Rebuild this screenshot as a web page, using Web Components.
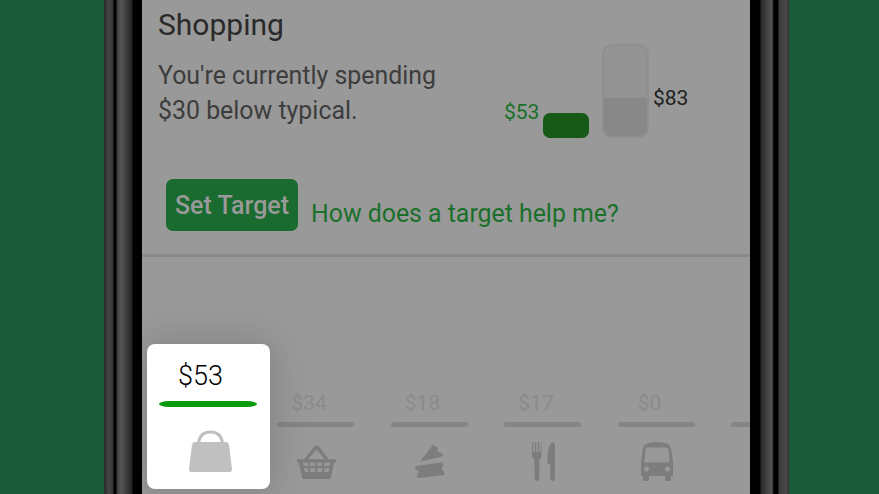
<!DOCTYPE html>
<html>
<head>
<meta charset="utf-8">
<style>
  html, body { margin: 0; height: 100%; overflow: hidden; background: #1b5a3a; }
  body { font-family: Roboto, "Noto Sans", sans-serif; }
</style>
</head>
<body>
<phone-frame>
  <spend-summary title="Shopping" spent="53" typical="83" fill="43">
    You're currently spending<br>$30 below typical.
  </spend-summary>
  <target-actions></target-actions>
  <tab-strip>
    <tab-item amount="$53"></tab-item>
    <tab-item amount="$34">
      <svg viewBox="0 0 40 36" width="39" height="34" preserveAspectRatio="none">
        <path fill="#7d7d7d" fill-rule="evenodd" d="M0 15h7.500L17.500 1.500Q20 -.5 22.500 1.500L32.500 15H40V18.500H38L35 34Q34.800 36 33 36H7Q5.200 36 5 34L2 18.500H0ZM11.500 15h17L20 4.500ZM6 18.500l.7 3.800h4.800v-3.800ZM13.500 18.500v3.800h5v-3.800ZM20.800 18.500v3.800h5v-3.800ZM28 18.500v3.800h5.300l.7-3.800ZM7.200 24.500l.8 4h3.500v-4ZM13.500 24.500v4h5v-4ZM20.800 24.500v4h5v-4ZM28 24.500v4h4.200l.8-4Z"/>
      </svg>
    </tab-item>
    <tab-item amount="$18">
      <svg viewBox="0 0 32 35" width="32" height="35">
        <path fill="#7d7d7d" d="M5.700 17.700L19 .7l5.300 3.600L23 7l6 3-.7 2.300ZM1 22.300L28.300 18.300l.8 4.200q-1.800 1-1.300 3 .5 1.700 2.300 1.500l.6 4L3.700 34.300l-.6-4.300q1.800-.8 1.400-2.800-.5-1.700-2.700-1.500Z"/>
      </svg>
    </tab-item>
    <tab-item amount="$17">
      <svg viewBox="0 0 24 39" width="24" height="39">
        <path fill="#7d7d7d" d="M0 0h1.200v10h1.600V0h1.400v10h1.600V0h1.400v10h1.600V0H9.500v13q0 3.500-2.200 4.500V37q0 2-2.400 2t-2.400-2V17.500Q0 16.500 0 13ZM20 0Q23 0 23 4V37q0 2-2.300 2t-2.400-2V22H15.500V14Q15.500 5 20 0Z"/>
      </svg>
    </tab-item>
    <tab-item amount="$0">
      <svg viewBox="0 0 34 39" width="34" height="39">
        <path fill="#7d7d7d" fill-rule="evenodd" d="M17 0Q30 0 31 6L33 20V34H31V37.500Q31 39 29 39H27Q25 39 25 37.500V34H9V37.500Q9 39 7 39H5Q3 39 3 37.500V34H1V20L3 6Q4 0 17 0ZM8 5.500Q5.800 5.500 5.500 7.500L4.500 19Q4.500 20.500 6 20.500H28Q29.500 20.500 29.500 19L28.500 7.500Q28.200 5.500 26 5.500ZM6.500 24.500a2.500 2.500 0 1 0 .01 0ZM27.500 24.500a2.500 2.500 0 1 0 .01 0Z"/>
      </svg>
    </tab-item>
    <tab-item amount=""></tab-item>
  </tab-strip>
  <focus-card amount="$53" slot="over"></focus-card>
</phone-frame>

<script>
class PhoneFrame extends HTMLElement {
  constructor() {
    super();
    this.attachShadow({ mode: 'open' });
  }

  connectedCallback() {
    this.shadowRoot.innerHTML = `
      <style>
        :host {
          display: flex;
          padding-left: 104px;
          height: 494px;
          overflow: hidden;
        }
        .rail {
          flex: none;
          width: 38px;
          background: linear-gradient(90deg, #2b2b2b 0, #444 5px, #333 9px, #000 10px, #000 12px, #3a3a3a 13px, #585858 17px, #222 28px, #000 29px);
        }
        .rail.right {
          width: 39px;
          background: linear-gradient(90deg, #000 0, #000 10px, #2a2a2a 11px, #555 22px, #222 23px, #000 24px, #000 28px, #3c3c3c 29px, #4a4a4a 37px, #2b2b2b 39px);
        }
        .screen {
          flex: none;
          width: 608px;
          position: relative;
          overflow: hidden;
          background: #999;
        }
      </style>
      <div class="rail"></div>
      <div class="screen">
        <slot></slot>
        <slot name="over"></slot>
      </div>
      <div class="rail right"></div>
    `;
  }
}

class SpendSummary extends HTMLElement {
  constructor() {
    super();
    this.attachShadow({ mode: 'open' });
  }

  connectedCallback() {
    const title = this.getAttribute('title');
    const spent = this.getAttribute('spent');
    const typical = this.getAttribute('typical');
    const fill = this.getAttribute('fill');

    this.shadowRoot.innerHTML = `
      <style>
        :host {
          display: flex;
          height: 179px;
          box-sizing: border-box;
          padding-left: 16px;
        }
        .copy { width: 346px; padding-top: 7px; }
        h2 {
          margin: 0;
          font-size: 30px;
          font-weight: 400;
          line-height: 36px;
          color: #2a2a2a;
        }
        p {
          margin: 15px 0 0;
          font-size: 24.9px;
          line-height: 35px;
          color: #3d3d3d;
        }
        .bars { display: flex; align-items: flex-end; height: 138px; }
        .col { display: flex; align-items: flex-end; }
        .spent { color: #1a7029; font-size: 21px; line-height: 24px; margin: 0 3px 14px 0; width: 36px; }
        .spent-bar { width: 46px; height: 25px; border-radius: 7px; background: #175a18; }
        .typical-bar {
          width: 47px;
          height: 94px;
          margin-left: 13px;
          box-sizing: border-box;
          border: 2px solid #8f8f8f;
          border-radius: 10px;
          background: #939393;
          display: flex;
          align-items: flex-end;
          overflow: hidden;
        }
        .typical-fill { width: 100%; height: ${fill - 5}px; background: #888; }
        .typical {
          color: #222;
          font-size: 21px;
          line-height: 24px;
          margin: 0 0 28px 4px;
        }
      </style>
      <div class="copy">
        <h2>${title}</h2>
        <p><slot></slot></p>
      </div>
      <div class="bars">
        <div class="col">
          <span class="spent">$${spent}</span>
          <div class="spent-bar"></div>
        </div>
        <div class="typical-bar"><div class="typical-fill"></div></div>
        <span class="typical">$${typical}</span>
      </div>
    `;
  }
}

class TargetActions extends HTMLElement {
  constructor() {
    super();
    this.attachShadow({ mode: 'open' });
  }

  connectedCallback() {
    this.shadowRoot.innerHTML = `
      <style>
        :host {
          display: flex;
          align-items: flex-end;
          height: 78px;
          box-sizing: border-box;
          padding: 0 0 23px 24px;
          border-bottom: 3px solid #8a8a8a;
        }
        button {
          all: unset;
          box-sizing: border-box;
          width: 132px;
          height: 52px;
          border-radius: 7px;
          background: #1a6b2f;
          color: #999;
          font: 500 25px/49px Roboto, sans-serif;
          text-align: center;
        }
        a {
          margin: 0 0 1px 13px;
          color: #1a7029;
          font-size: 24.85px;
          line-height: 32px;
          text-decoration: none;
        }
      </style>
      <button>Set Target</button>
      <a href="#">How does a target help me?</a>
    `;
  }
}

class TabStrip extends HTMLElement {
  constructor() {
    super();
    this.attachShadow({ mode: 'open' });
  }

  connectedCallback() {
    this.shadowRoot.innerHTML = `
      <style>
        :host {
          display: flex;
          gap: 36.5px;
          padding: 134px 0 0 21.5px;
          width: max-content;
        }
      </style>
      <slot></slot>
    `;
  }
}

class TabItem extends HTMLElement {
  constructor() {
    super();
    this.attachShadow({ mode: 'open' });
  }

  connectedCallback() {
    this.shadowRoot.innerHTML = `
      <style>
        :host {
          display: flex;
          flex-direction: column;
          align-items: center;
          width: 77px;
          flex: none;
          color: #8b8b8b;
        }
        .amount {
          height: 24px;
          font-size: 21px;
          line-height: 24px;
          padding-right: 13px;
        }
        .line {
          width: 77px;
          height: 5px;
          margin: 7px 0 15px;
          border-radius: 3px;
          background: #858585;
        }
        .icon { display: flex; height: 39px; align-items: center; padding-left: 2px; }
      </style>
      <div class="amount">${this.getAttribute('amount')}</div>
      <div class="line"></div>
      <div class="icon"><slot></slot></div>
    `;
  }
}

class FocusCard extends HTMLElement {
  constructor() {
    super();
    this.attachShadow({ mode: 'open' });
  }

  connectedCallback() {
    this.shadowRoot.innerHTML = `
      <style>
        :host {
          position: absolute;
          left: 5px;
          top: 344px;
          width: 123px;
          height: 145px;
          box-sizing: border-box;
          padding: 16px 13px 0 12px;
          display: flex;
          flex-direction: column;
          background: #fff;
          border-radius: 8px;
          box-shadow: 0 0 34px 6px rgba(0, 0, 0, .13);
        }
        .amount {
          font-size: 27px;
          font-weight: 300;
          line-height: 32px;
          color: #000;
          padding-left: 19px;
        }
        .line {
          height: 6px;
          margin-top: 9px;
          border-radius: 10px / 3px;
          background: #0a9b0a;
        }
        svg { display: block; margin: 23px 0 0 30px; }
      </style>
      <div class="amount">${this.getAttribute('amount')}</div>
      <div class="line"></div>
      <svg viewBox="0 0 43 42" width="43" height="42">
        <path fill="none" stroke="#c0c0c0" stroke-width="3" d="M9.500 13Q11 2 21.500 2T33.500 13"/>
        <path fill="#c0c0c0" d="M6 12H37Q39.500 12 40 15L43 39Q43 42 41 42H2Q0 42 0 39L3 15Q3.500 12 6 12Z"/>
      </svg>
    `;
  }
}

customElements.define('phone-frame', PhoneFrame);
customElements.define('spend-summary', SpendSummary);
customElements.define('target-actions', TargetActions);
customElements.define('tab-strip', TabStrip);
customElements.define('tab-item', TabItem);
customElements.define('focus-card', FocusCard);
</script>
</body>
</html>
